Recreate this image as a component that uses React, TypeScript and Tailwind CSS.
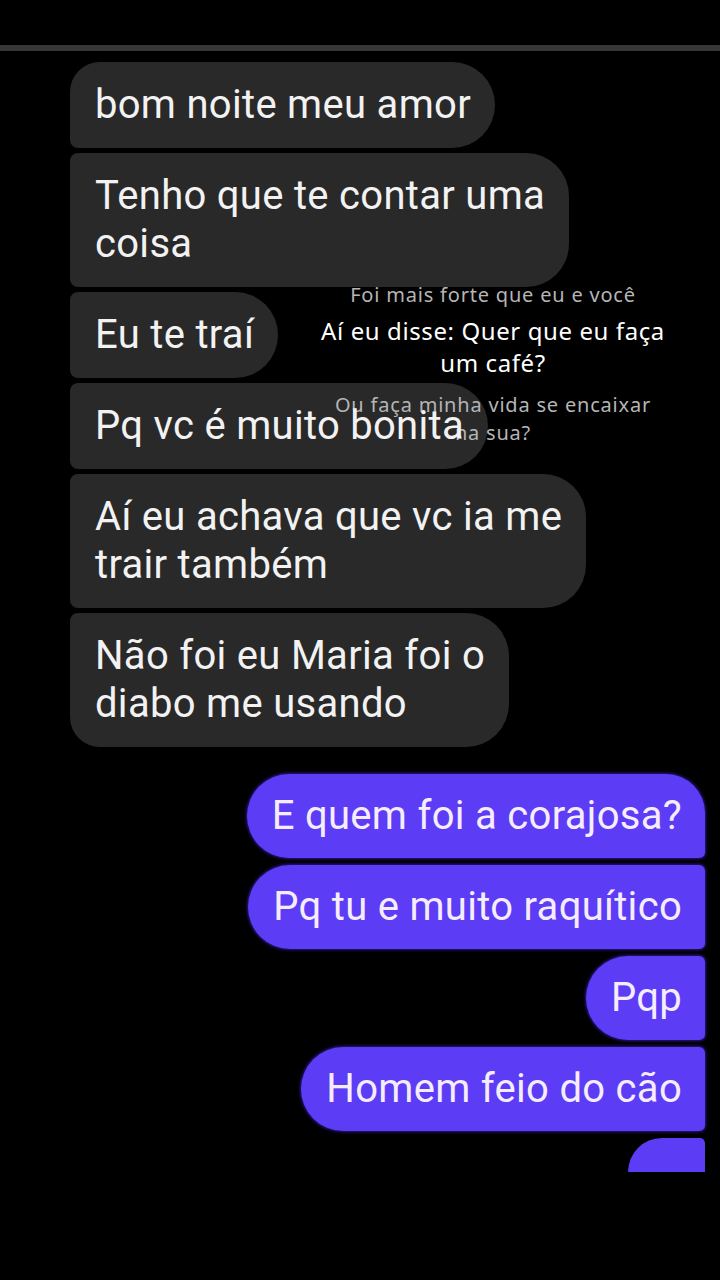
import React from "react";

const font = { fontFamily: "Roboto, 'Noto Sans', sans-serif" };

function Gray({ children, cls }: { children: React.ReactNode; cls: string }) {
  return (
    <div className={`w-fit bg-[#292929] pl-[25px] pr-[24px] py-[19px] text-[40px] leading-[48px] tracking-[0.3px] text-[#f2f2f2] ${cls}`}>
      <span className="relative z-[2]">{children}</span>
    </div>
  );
}

function Purple({ children, cls }: { children: React.ReactNode; cls: string }) {
  return (
    <div className={`w-fit self-end bg-[#5c3cf4] pl-[25px] pr-[23px] py-[18px] text-[40px] leading-[48px] tracking-[0.3px] text-[#f6ecff] shadow-[0_0_3px_1px_#2a1890] ${cls}`}>
      {children}
    </div>
  );
}

export default function App() {
  return (
    <div className="relative h-[1280px] w-[720px] overflow-hidden bg-black" style={font}>
      <div className="pt-[45px]">
        <div className="h-[6px] bg-[#363636]" />
      </div>
      <div className="mt-[11px] flex flex-col gap-[5px] pl-[70px]">
        <Gray cls="rounded-tl-[30px] rounded-bl-[8px] rounded-r-[43px]">bom noite meu amor</Gray>
        <Gray cls="rounded-l-[8px] rounded-r-[43px]">
          Tenho que te contar uma
          <br />
          coisa
        </Gray>
        <Gray cls="rounded-l-[8px] rounded-r-[43px]">Eu te traí</Gray>
        <Gray cls="rounded-l-[8px] rounded-r-[43px]">Pq vc é muito bonita</Gray>
        <Gray cls="rounded-l-[8px] rounded-r-[43px]">
          Aí eu achava que vc ia me
          <br />
          trair também
        </Gray>
        <Gray cls="rounded-tl-[8px] rounded-bl-[30px] rounded-r-[43px]">
          Não foi eu Maria foi o
          <br />
          diabo me usando
        </Gray>
      </div>
      <div className="mt-[27px] flex flex-col gap-[7px] pr-[15px]">
        <Purple cls="rounded-l-[43px] rounded-tr-[40px] rounded-br-[6px]">E quem foi a corajosa?</Purple>
        <Purple cls="rounded-l-[43px] rounded-r-[6px]">Pq tu e muito raquítico</Purple>
        <Purple cls="rounded-l-[43px] rounded-r-[6px]">Pqp</Purple>
        <Purple cls="rounded-l-[43px] rounded-r-[6px]">Homem feio do cão</Purple>
        <div className="h-[34px] w-[77px] self-end rounded-tl-[40px] rounded-tr-[6px] bg-[#5c3cf4]" />
      </div>

      <div
        className="absolute left-[280px] top-[281px] z-[1] flex w-[426px] flex-col items-center text-center"
        style={{ fontFamily: "'Noto Sans', sans-serif" }}
      >
        <div className="text-[20px] leading-[28px] tracking-[0.8px] text-[#b5b5b5]">Foi mais forte que eu e você</div>
        <div className="mt-[6px] text-[24px] leading-[32px] tracking-[0.6px] text-white">
          Aí eu disse: Quer que eu faça
          <br />
          um café?
        </div>
        <div className="mt-[12px] text-[20px] leading-[28px] tracking-[0.8px] text-[#b5b5b5]">
          Ou faça minha vida se encaixar
          <br />
          na sua?
        </div>
      </div>
    </div>
  );
}
